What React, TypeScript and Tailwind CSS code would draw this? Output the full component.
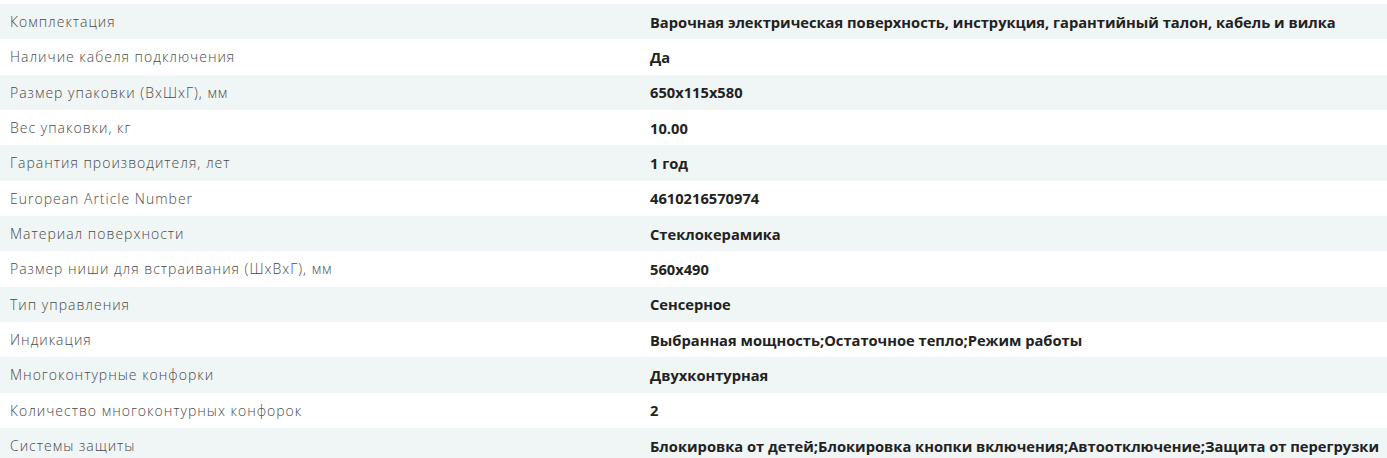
import React from 'react';

const specs = [
  ['Комплектация', 'Варочная электрическая поверхность, инструкция, гарантийный талон, кабель и вилка'],
  ['Наличие кабеля подключения', 'Да'],
  ['Размер упаковки (ВхШхГ), мм', '650x115x580'],
  ['Вес упаковки, кг', '10.00'],
  ['Гарантия производителя, лет', '1 год'],
  ['European Article Number', '4610216570974'],
  ['Материал поверхности', 'Стеклокерамика'],
  ['Размер ниши для встраивания (ШхВхГ), мм', '560x490'],
  ['Тип управления', 'Сенсерное'],
  ['Индикация', 'Выбранная мощность;Остаточное тепло;Режим работы'],
  ['Многоконтурные конфорки', 'Двухконтурная'],
  ['Количество многоконтурных конфорок', '2'],
  ['Системы защиты', 'Блокировка от детей;Блокировка кнопки включения;Автоотключение;Защита от перегрузки'],
];

export default function App() {
  return (
    <div className="w-[1387px] h-[458px] overflow-hidden bg-white pt-1">
      {specs.map(([label, value], i) => (
        <div
          key={label}
          className={`flex items-center h-[35.33px] ${i % 2 === 0 ? 'bg-[#f0f5f5]' : 'bg-white'}`}
        >
          <div className="w-[640px] shrink-0 pl-[10px] text-[14px] font-light tracking-[1px] text-[#4a4a4a] font-['Open_Sans',sans-serif]">
            {label}
          </div>
          <div className="pl-[10px] text-[14.7px] font-bold text-[#222] font-['Open_Sans',sans-serif] whitespace-nowrap">
            {value}
          </div>
        </div>
      ))}
    </div>
  );
}
